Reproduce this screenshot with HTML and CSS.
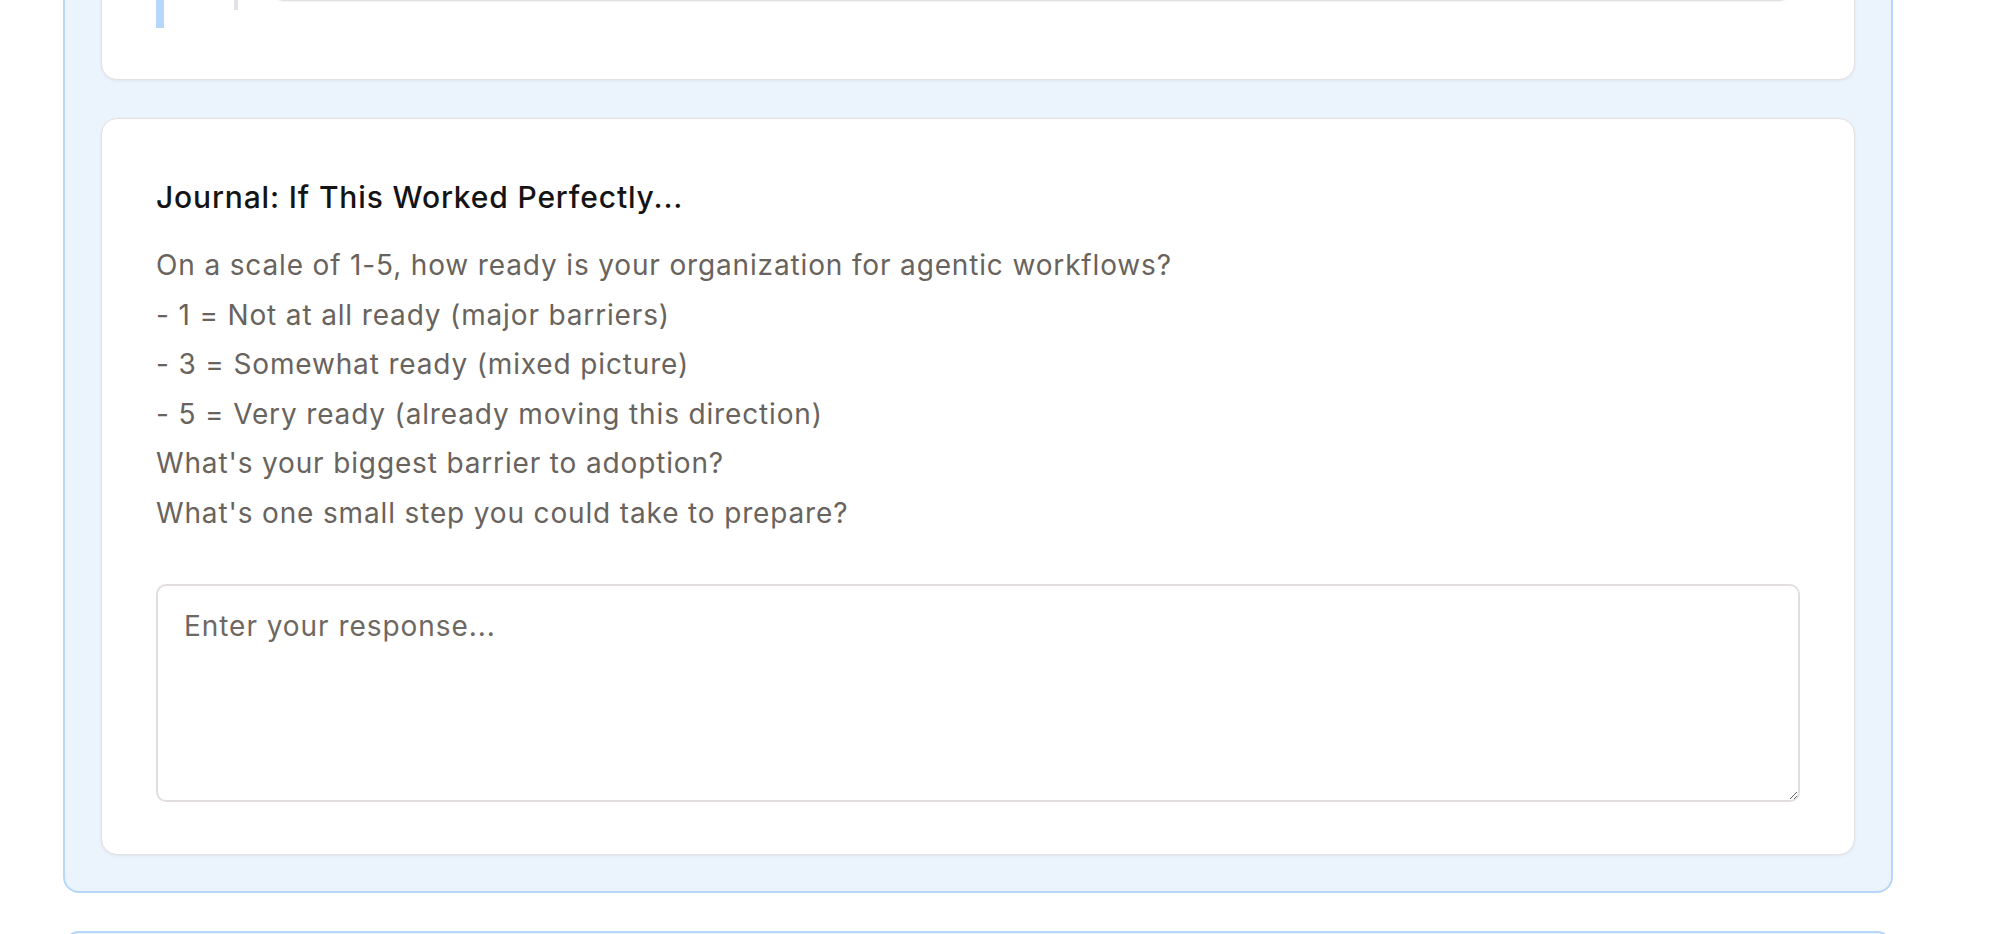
FILE: index.html
```html
<!DOCTYPE html>
<html lang="en">
<head>
<meta charset="utf-8">
<title>Journal</title>
<link rel="stylesheet" href="styles.css">
</head>
<body>
<div class="page">
  <section class="module">
    <div class="card card-top">
      <div class="timeline">
        <div class="step">
          <div class="step-box"></div>
        </div>
      </div>
    </div>
    <div class="card card-journal">
      <h3 class="journal-title">Journal: If This Worked Perfectly...</h3>
      <div class="prompt">
        <p class="prompt-line">On a scale of 1-5, how ready is your organization for agentic workflows?</p>
        <p class="prompt-line">- 1 = Not at all ready (major barriers)</p>
        <p class="prompt-line">- 3 = Somewhat ready (mixed picture)</p>
        <p class="prompt-line">- 5 = Very ready (already moving this direction)</p>
        <p class="prompt-line">What's your biggest barrier to adoption?</p>
        <p class="prompt-line">What's one small step you could take to prepare?</p>
      </div>
      <textarea class="response" placeholder="Enter your response..."></textarea>
    </div>
  </section>
  <section class="module module-next"></section>
</div>
</body>
</html>
```
FILE: styles.css
```css
html, body {
  margin: 0;
  padding: 0;
  background: #ffffff;
}

body {
  font-family: Inter, "Noto Sans", "Liberation Sans", sans-serif;
  overflow: hidden;
}

.page {
  padding-left: 63px;
  width: 1830px;
}

.module {
  box-sizing: border-box;
  background: #ebf3fd;
  border: 2px solid #b6d7f9;
  border-radius: 16px;
  padding: 0 36px 36px;
  display: flex;
  flex-direction: column;
  gap: 38px;
}

.module:first-child {
  margin-top: -188px;
}

.module-next {
  margin-top: 38px;
  height: 200px;
}

.card {
  background: #ffffff;
  border: 1px solid #e4e0e0;
  border-radius: 16px;
  box-shadow: 0 1px 3px rgba(0, 0, 0, 0.06);
}

.card-top {
  padding: 54px 54px 51px;
}

.timeline {
  border-left: 8px solid #b4d7fb;
  padding-left: 70px;
  padding-bottom: 18px;
}

.step {
  border-left: 4px solid #e3e1e8;
  padding-left: 35px;
  padding-bottom: 9px;
}

.step-box {
  height: 130px;
  margin-right: 10px;
  border: 1px solid #e2dfdf;
  border-radius: 10px;
  box-shadow: 0 1px 2px rgba(0, 0, 0, 0.05);
}

.card-journal {
  padding: 54px 54px 52px;
}

.journal-title {
  margin: 7px 0 0;
  font-size: 30px;
  line-height: 34px;
  font-weight: 500;
  letter-spacing: 0.85px;
  color: #141414;
}

.prompt {
  margin-top: 27px;
}

.prompt-line {
  margin: 0;
  font-size: 28px;
  line-height: 49.6px;
  letter-spacing: 0.85px;
  color: #69635e;
}

.response {
  display: block;
  box-sizing: border-box;
  width: 100%;
  height: 218px;
  margin-top: 45px;
  padding: 20px 26px;
  border: 2px solid #e2dede;
  border-radius: 10px;
  font-family: Inter, "Noto Sans", "Liberation Sans", sans-serif;
  font-size: 28px;
  line-height: 40px;
  letter-spacing: 0.95px;
  color: #3a3633;
  background: #ffffff;
  outline: none;
}

.response::placeholder {
  color: #6e6863;
  opacity: 1;
}
```
